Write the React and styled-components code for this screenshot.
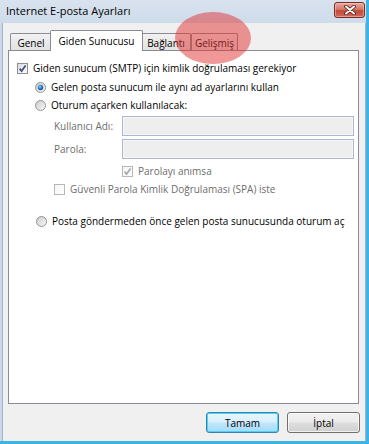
import React, { useId } from 'react'
import styled, { createGlobalStyle } from 'styled-components'

const GlobalStyle = createGlobalStyle`
  html, body {
    margin: 0;
    padding: 0;
  }
  body {
    width: 369px;
    height: 444px;
    overflow: hidden;
    font-family: 'Open Sans', 'Liberation Sans', sans-serif;
    font-size: 10px;
    color: #000;
  }
`

// little win7 style check box
const CheckBox = ({ checked, disabled }) => {
    const id = useId()
    return (
        <svg width="11" height="11" viewBox="0 0 11 11" style={{ flex: 'none' }}>
            <defs>
                <linearGradient id={id} x1="0" y1="0" x2="1" y2="1">
                    <stop offset="0" stopColor={disabled ? '#f4f4f4' : '#dcdcdc'} />
                    <stop offset="1" stopColor="#ffffff" />
                </linearGradient>
            </defs>
            <rect x="0.5" y="0.5" width="10" height="10" fill={`url(#${id})`} stroke={disabled ? '#b8b8b8' : '#8e8f8f'} />
            {checked && (
                <path d="M2.6 5.6 L4.6 8 L8.6 2.4" fill="none"
                    stroke={disabled ? '#a8a8a8' : '#3d4f88'} strokeWidth="1.7" />
            )}
        </svg>
    )
}

const Radio = ({ checked }) => {
    const id = useId()
    return (
        <svg width="11" height="11" viewBox="0 0 11 11" style={{ flex: 'none' }}>
            <defs>
                <linearGradient id={id + 'a'} x1="0" y1="0" x2="1" y2="1">
                    <stop offset="0" stopColor="#c9c9c9" />
                    <stop offset="1" stopColor="#fbfbfb" />
                </linearGradient>
                <radialGradient id={id + 'b'} cx="0.4" cy="0.35" r="0.7">
                    <stop offset="0" stopColor="#8fd3ff" />
                    <stop offset="0.5" stopColor="#2a7fd0" />
                    <stop offset="1" stopColor="#10457f" />
                </radialGradient>
            </defs>
            <circle cx="5.5" cy="5.5" r="5" fill={`url(#${id}a)`} stroke="#949494" />
            {checked && <circle cx="5.5" cy="5.5" r="2.7" fill={`url(#${id}b)`} />}
        </svg>
    )
}

function App() {
    return (
        <>
            <GlobalStyle />
            <Window>
                <TitleBar>
                    <Title>Internet E-posta Ayarları</Title>
                    <CloseButton>
                        <svg width="14" height="10" viewBox="0 0 14 10">
                            <path d="M3 1.5 L11 8.5 M11 1.5 L3 8.5" stroke="#4a1a14" strokeWidth="3.6" strokeLinecap="round" />
                            <path d="M3 1.5 L11 8.5 M11 1.5 L3 8.5" stroke="#ffffff" strokeWidth="2" strokeLinecap="round" />
                        </svg>
                    </CloseButton>
                </TitleBar>
                <Client>
                    <TabStrip>
                        <Tab $w={42}>Genel</Tab>
                        <Tab $w={93} $active>Giden Sunucusu</Tab>
                        <Tab $w={50}>Bağlantı</Tab>
                        <Tab $w={47}>Gelişmiş</Tab>
                    </TabStrip>
                    <Panel>
                        <Row $top={0} $indent={0}>
                            <CheckBox checked />
                            <Label>Giden sunucum (SMTP) için kimlik doğrulaması gerekiyor</Label>
                        </Row>
                        <Row $top={1} $indent={18}>
                            <Radio checked />
                            <Label>Gelen posta sunucum ile aynı ad ayarlarını kullan</Label>
                        </Row>
                        <Row $top={0} $indent={18}>
                            <Radio />
                            <Label>Oturum açarken kullanılacak:</Label>
                        </Row>
                        <FieldRow $top={2}>
                            <FieldLabel>Kullanıcı Adı:</FieldLabel>
                            <Input disabled />
                        </FieldRow>
                        <FieldRow $top={3}>
                            <FieldLabel>Parola:</FieldLabel>
                            <Input disabled type="password" />
                        </FieldRow>
                        <Row $top={3} $indent={105}>
                            <CheckBox checked disabled />
                            <Label $disabled>Parolayı anımsa</Label>
                        </Row>
                        <Row $top={0} $indent={37}>
                            <CheckBox disabled />
                            <Label $disabled>Güvenli Parola Kimlik Doğrulaması (SPA) iste</Label>
                        </Row>
                        <Row $top={14} $indent={19}>
                            <Radio />
                            <Label>Posta göndermeden önce gelen posta sunucusunda oturum aç</Label>
                        </Row>
                    </Panel>
                    <ButtonRow>
                        <Button $default>Tamam</Button>
                        <Button>İptal</Button>
                    </ButtonRow>
                </Client>
                <Highlight />
            </Window>
        </>
    )
}

export default App

const Window = styled.div`
    position: relative;
    width: 369px;
    height: 444px;
    box-sizing: border-box;
    display: flex;
    flex-direction: column;
    background: #c9d9ea;
    border-right: 3px solid #3cb4e6;
    border-bottom: 3px solid #3cb4e6;
`
const TitleBar = styled.div`
    height: 23px;
    flex: none;
    display: flex;
    align-items: center;
    justify-content: space-between;
    padding: 0 1px 0 6px;
    background: linear-gradient(to bottom, #d9e3ef, #cedbea);
`
const Title = styled.div`
    font-size: 11px;
    color: #000;
    margin-top: -2px;
`
const CloseButton = styled.div`
    width: 29px;
    height: 14px;
    margin-top: -3px;
    display: flex;
    align-items: center;
    justify-content: center;
    border: 1px solid #7d2a22;
    border-radius: 3px;
    background: linear-gradient(to bottom, #e9a99c 0%, #d47a6a 45%, #c2473a 55%, #cf6a55 100%);
    box-shadow: inset 0 0 0 1px rgba(255, 220, 210, 0.45);
`
const Client = styled.div`
    flex: 1;
    margin-left: 2px;
    display: flex;
    flex-direction: column;
    padding: 7px 6px 0 5px;
    background: #f0f0f0;
    border-left: 1px solid #a4b4c8;
    border-right: 1px solid #a4b4c8;
`
const TabStrip = styled.div`
    height: 20px;
    display: flex;
    align-items: flex-end;
    padding-left: 2px;
    position: relative;
    z-index: 1;
`
const Tab = styled.div`
    width: ${p => p.$w}px;
    height: ${p => (p.$active ? 21 : 17)}px;
    box-sizing: border-box;
    flex: none;
    display: flex;
    align-items: center;
    justify-content: center;
    padding-top: ${p => (p.$active ? 0 : 2)}px;
    margin: ${p => (p.$active ? '0 -2px -1px -2px' : '0')};
    position: relative;
    z-index: ${p => (p.$active ? 2 : 1)};
    border: 1px solid #898c95;
    border-bottom: none;
    border-radius: 2px 2px 0 0;
    background: ${p => (p.$active ? '#ffffff' : 'linear-gradient(to bottom, #f2f2f2, #e2e2e2)')};
    white-space: nowrap;
`
const Panel = styled.div`
    height: 354px;
    box-sizing: border-box;
    flex: none;
    display: flex;
    flex-direction: column;
    padding: 8px 4px 0 8px;
    background: #ffffff;
    border: 1px solid #898c95;
`
const Row = styled.div`
    height: 18px;
    display: flex;
    align-items: center;
    gap: 5px;
    margin-top: ${p => p.$top}px;
    margin-left: ${p => p.$indent}px;
`
const Label = styled.span`
    color: ${p => (p.$disabled ? '#6d6d6d' : '#000')};
    white-space: nowrap;
`
const FieldRow = styled.div`
    height: 20px;
    display: flex;
    align-items: center;
    margin-top: ${p => p.$top}px;
    margin-left: 37px;
`
const FieldLabel = styled.span`
    width: 68px;
    flex: none;
    color: #6d6d6d;
`
const Input = styled.input`
    width: 232px;
    height: 20px;
    box-sizing: border-box;
    margin: 0;
    padding: 0;
    border: 1px solid #a9b9cd;
    background: #eeeeee;
    box-shadow: inset 0 0 0 1px #f6f6f6;
    outline: none;
`
const ButtonRow = styled.div`
    display: flex;
    justify-content: flex-end;
    gap: 8px;
    margin: 8px -1px 0 0;
`
const Button = styled.div`
    width: 73px;
    height: 21px;
    box-sizing: border-box;
    display: flex;
    align-items: center;
    justify-content: center;
    border: 1px solid ${p => (p.$default ? '#3c7fb1' : '#707070')};
    border-radius: 3px;
    background: ${p => (p.$default
        ? 'linear-gradient(to bottom, #eaf6fd 0%, #d9f0fc 45%, #bee6fd 55%, #a7d9f5 100%)'
        : 'linear-gradient(to bottom, #f2f2f2 0%, #ebebeb 45%, #dddddd 55%, #cfcfcf 100%)')};
    box-shadow: inset 0 0 0 1px ${p => (p.$default ? '#48d4f8' : 'rgba(255,255,255,0.7)')};
    color: #000;
`
const Highlight = styled.div`
    position: absolute;
    left: 175px;
    top: 12px;
    width: 76px;
    height: 52px;
    border-radius: 50%;
    background: rgba(225, 50, 50, 0.5);
    z-index: 5;
    pointer-events: none;
`
